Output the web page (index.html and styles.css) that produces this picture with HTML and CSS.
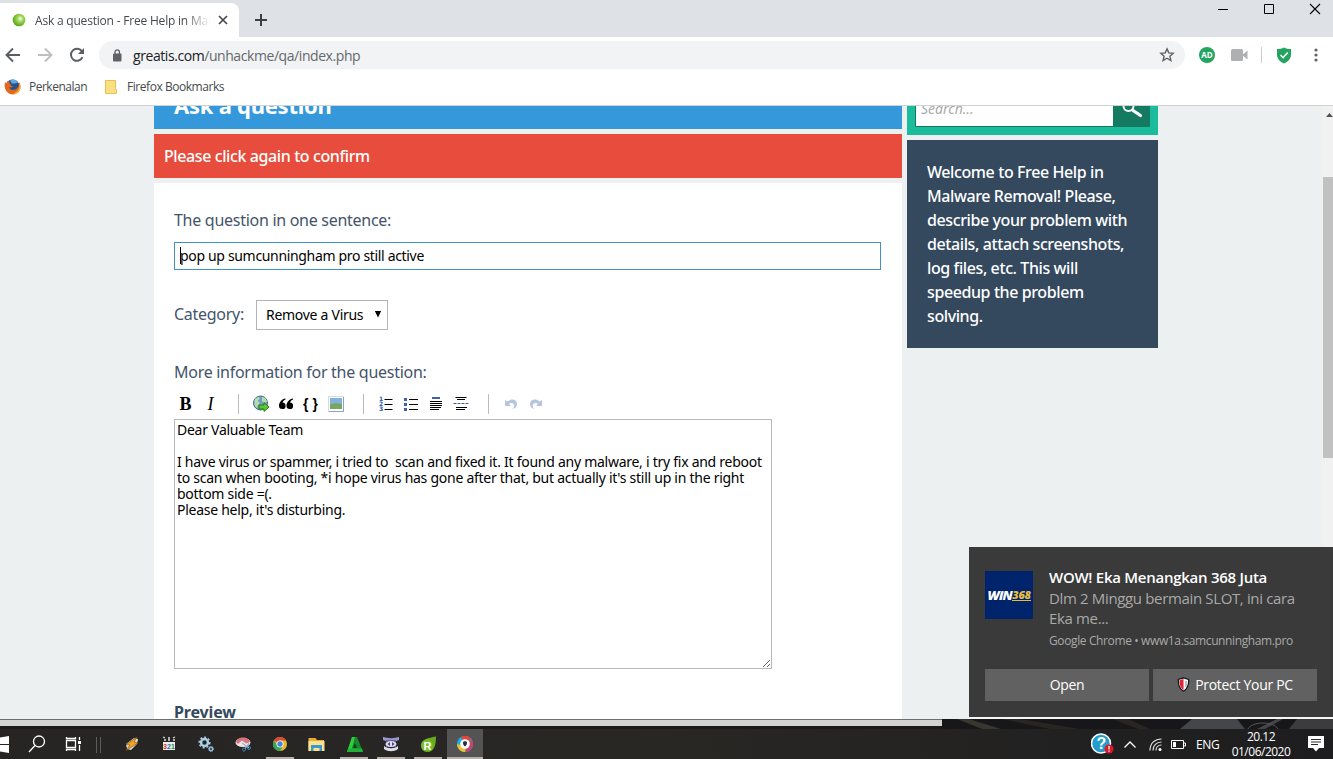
FILE: index.html
```
<!DOCTYPE html>
<html lang="en">

<head>
    <meta charset="UTF-8">
    <meta name="viewport" content="width=device-width, initial-scale=1.0">
    <title>Ask a question - Free Help in Malware Removal</title>
    <link rel="stylesheet" href="styles.css">
</head>

<body>
    <div class="tabs">
        <div class="tab">
            <svg class="favicon" width="14" height="14" viewBox="0 0 14 14"><defs><radialGradient id="ball" cx=".6" cy=".4" r=".6"><stop offset="0" stop-color="#fff"/><stop offset=".35" stop-color="#a8dc5c"/><stop offset="1" stop-color="#56a51d"/></radialGradient></defs><circle cx="7" cy="7" r="6.3" fill="url(#ball)"/></svg>
            <span class="tab-title"><span class="t-tab">Ask a question - Free Help in Mal</span></span>
            <svg width="10" height="10" viewBox="0 0 10 10" stroke="#45494d" stroke-width="1.7"><path d="M1 1l8 8M9 1l-8 8"/></svg>
        </div>
        <svg class="new-tab" width="14" height="14" viewBox="0 0 14 14" stroke="#3c4043" stroke-width="2"><path d="M7 1v12M1 7h12"/></svg>
        <div class="window-buttons">
            <svg width="12" height="12" viewBox="0 0 12 12" stroke="#000"><path d="M1 6.5h10"/></svg>
            <svg width="12" height="12" viewBox="0 0 12 12" stroke="#000" fill="none"><path d="M1.5 1.5h9v9h-9z"/></svg>
            <svg width="12" height="12" viewBox="0 0 12 12" stroke="#000" stroke-width="1.1"><path d="M1 1l10 10M11 1L1 11"/></svg>
        </div>
    </div>

    <div class="toolbar">
        <div class="nav">
            <svg width="16" height="16" viewBox="0 0 16 16" fill="none" stroke="#5a5e62" stroke-width="1.9"><path d="M15 8H2M8 1.5L1.5 8 8 14.5"/></svg>
            <svg width="16" height="16" viewBox="0 0 16 16" fill="none" stroke="#bcbec1" stroke-width="1.9"><path d="M1 8h13M8 1.5L14.500 8 8 14.500"/></svg>
            <svg width="16" height="16" viewBox="0 0 16 16" fill="none" stroke="#5a5e62" stroke-width="2"><path d="M13.500 10.200A6 6 0 1 1 12.800 4.200"/><path d="M15 1v6H9z" fill="#5a5e62" stroke="none"/></svg>
        </div>
        <div class="address">
            <svg width="10" height="13" viewBox="0 0 10 13"><rect x="1" y="4.500" width="8.500" height="8" rx="1" fill="#5f6368"/><path d="M3 5V3a2.200 2.200 0 0 1 4.400 0v2" fill="none" stroke="#5f6368" stroke-width="1.300"/></svg>
            <span class="url"><b>greatis.com</b>/unhackme/qa/index.php</span>
            <svg class="star" width="16" height="16" viewBox="0 0 16 16" fill="none" stroke="#5f6368" stroke-width="1.400"><path d="M8 1.900l1.800 4 4.400.400-3.300 2.900 1 4.300L8 11.200l-3.900 2.300 1-4.300L1.800 6.300l4.400-.400z"/></svg>
        </div>
        <div class="extensions">
            <span class="ad">AD</span>
            <svg width="17" height="14" viewBox="0 0 17 14" fill="#aeb0b2"><rect x="0" y="1" width="12" height="12" rx="1.500"/><path d="M11 7l5.500-4.500v9z"/></svg>
            <i class="ext-line"></i>
            <svg width="16" height="17" viewBox="0 0 16 17"><path d="M8 .5c2 1.200 4.500 1.500 7 1.500v5.500c0 4-3 7.500-7 9-4-1.500-7-5-7-9V2C3.500 2 6 1.700 8 .5z" fill="#23a55f"/><path d="M4.500 8l2.600 2.600L11.800 5.400" fill="none" stroke="#fff" stroke-width="1.500"/></svg>
            <svg width="4" height="14" viewBox="0 0 4 14" fill="#5f6368"><circle cx="2" cy="2" r="1.600"/><circle cx="2" cy="7" r="1.600"/><circle cx="2" cy="12" r="1.600"/></svg>
        </div>
    </div>

    <div class="bookmarks">
        <svg width="17" height="17" viewBox="0 0 17 17"><circle cx="8.500" cy="8.500" r="7" fill="#25548d"/><path d="M6 2.500c3-2 7-.8 8 2l-3 1-3 0z" fill="#63a9d8"/><path d="M1 4c-1.300 5 .5 9.500 4 11.500 4 2 8 .8 10.300-2.500C17 10 17 6.500 15 4c.2 3.500-.8 6.500-3.700 7.600-3 1-5.800-.3-6-2.600 1.500.8 3 .4 4-.7C7.500 8 6.500 7.500 6.600 6.300 5.500 5.200 5 4.200 5.200 3 4 3.200 3.200 4 2.800 5 1.800 5 1.300 4.600 1 4z" fill="#e6661c"/><path d="M13 13.500c2-1.500 3-5 2-9 2 3 2 7-.3 9.500-1.500 1.500-3.500 2-5.500 2z" fill="#f5b82e"/></svg>
        <span class="t-bookmark">Perkenalan</span>
        <svg class="folder" width="12" height="14" viewBox="0 0 12 14"><path d="M.5.5h10v9h1v4H.5z" fill="#fbdf80" stroke="#e5c257"/></svg>
        <span class="t-bookmark wide">Firefox Bookmarks</span>
    </div>

    <div class="page">
        <div class="main">
            <div class="heading"><h1>Ask a question</h1></div>
            <div class="error">Please click again to confirm</div>
            <div class="form">
                <label class="label l-title">The question in one sentence:</label>
                <div class="field"><i class="caret"></i><span>pop up sumcunningham pro still active</span></div>
                <div class="category">
                    <label class="label l-category">Category:</label>
                    <div class="select"><span>Remove a Virus</span><svg width="8" height="7" viewBox="0 0 8 7"><path d="M.8 0h6.400L4 6.500z"/></svg></div>
                </div>
                <label class="label l-more">More information for the question:</label>
                <div class="editor-buttons">
                    <b class="wmd-bold">B</b>
                    <i class="wmd-italic">I</i>
                    <i class="line"></i>
                    <svg viewBox="0 0 18 18"><circle cx="8.500" cy="8" r="7" fill="#6f9fca" stroke="#466f93"/><path d="M3 4c2-2 4-2 5-1L6 6 8 8l-2 2-1 3C2 11 2 7 3 4zM10 2c3 0 5 3 5 5l-3 1-2-2z" fill="#b7dba9"/><path d="M7 10h5V7.500l5 4.500-5 4.500V14H7z" fill="#5fc735" stroke="#278016"/></svg>
                    <svg viewBox="0 0 18 18"><path d="M8.500 3.500C5 4 2 7 2 10.800a3.300 3.300 0 1 0 3.500-3.300C6 6 7 5 8.500 4.500zM16 3.500c-3.500.5-6.500 3.500-6.500 7.300A3.300 3.300 0 1 0 13 7.500C13.500 6 14.500 5 16 4.500z"/></svg>
                    <b class="wmd-code">{ }</b>
                    <svg viewBox="0 0 18 18"><rect x="1.500" y="1.500" width="15" height="15" fill="#fff" stroke="#d5dbe4"/><path d="M16.500 2v14.500H2" fill="none" stroke="#8fa2bd"/><path d="M3 3h12v10H3z" fill="#82b2dc"/><path d="M3 9.500c4-2 8-1.500 12-.5v5H3z" fill="#79a663"/></svg>
                    <i class="line"></i>
                    <svg viewBox="0 0 18 18"><path d="M7.500 4.500h8M7.500 9.500h8M7.500 14.500h8" stroke="#000" stroke-width="1.200"/><g fill="#2f55a4" font-family="DejaVu Sans" font-weight="bold" font-size="6"><text x="2" y="6">1</text><text x="2" y="11">2</text><text x="2" y="16">3</text></g></svg>
                    <svg viewBox="0 0 18 18"><path d="M7 4.500h9M7 9.500h9M7 14.500h9" stroke="#000" stroke-width="1.200"/><path d="M2 3h3v3H2zM2 8h3v3H2zM2 13h3v3H2z" fill="#3d62a8"/></svg>
                    <svg viewBox="0 0 18 18"><path d="M5 3h8" stroke="#3d62a8" stroke-width="2"/><path d="M3 6.500h12M3 8.500h12M3 10.500h12M3 12.500h11M3 14.500h9" stroke="#000"/></svg>
                    <svg viewBox="0 0 18 18"><path d="M3.500 2.500h11M5 4.500h8M4 12.500h11M4 14.500h9" stroke="#000"/><path d="M1.500 8.500h15" stroke="#3d5f91" stroke-dasharray="3 1"/></svg>
                    <i class="line"></i>
                    <svg viewBox="0 0 18 18"><path d="M5.500 6.500c4.500-4 9.500-1.500 9.500 2.500 0 2.500-1.500 4.500-4.500 5 2-1.800 2.500-4.500.5-5.500-1.500-.8-3-.2-4 .5L9 11H3V5z" fill="#b6c5dd"/></svg>
                    <svg viewBox="0 0 18 18"><path d="M12.500 6.500C8 2.500 3 5 3 9c0 2.500 1.500 4.500 4.500 5-2-1.800-2.500-4.500-.5-5.500 1.500-.8 3-.2 4 .5L9 11h6V5z" fill="#b6c5dd"/></svg>
                </div>
                <textarea class="content" spellcheck="false">Dear Valuable Team

I have virus or spammer, i tried to  scan and fixed it. It found any malware, i try fix and reboot
to scan when booting, *i hope virus has gone after that, but actually it's still up in the right
bottom side =(.
Please help, it's disturbing.</textarea>
                <div class="preview">Preview</div>
            </div>
        </div>
        <div class="sidebar">
            <div class="search">
                <div class="search-box"><span>Search...</span></div>
                <div class="search-button"><svg width="22" height="21" viewBox="0 0 22 21" fill="none" stroke="#fff"><circle cx="7.500" cy="8" r="5" stroke-width="2"/><path d="M12 12.500l7.500 5" stroke-width="3.200" stroke-linecap="round"/></svg></div>
            </div>
            <div class="welcome">Welcome to Free Help in<br>Malware Removal! Please,<br>describe your problem with<br>details, attach screenshots,<br>log files, etc. This will<br>speedup the problem<br>solving.</div>
        </div>
        <div class="scrollbar">
            <svg width="7" height="4" viewBox="0 0 7 4"><path d="M0 4l3.500-4L7 4z" fill="#505050"/></svg>
            <div class="thumb"></div>
        </div>
    </div>

    <div class="desktop">
        <div class="window-edge"></div>
        <svg width="391" height="10" viewBox="0 0 391 10" preserveAspectRatio="none"><path d="M0 0h391v10H0z" fill="#171719"/><path d="M15 0h12l32 10H40z" fill="#39362f"/><path d="M60 0h18l60 10h-30zM170 0h16l22 10h-12z" fill="#282522"/><path d="M250 0h45l8 10h-65zM335 0h6l-18 10h-8z" fill="#45464a"/><path d="M306 10c4-8 26-8 30 0" fill="none" stroke="#55565a"/><path d="M355 0h36v10h-44z" fill="#3c3c3e"/></svg>
    </div>

    <div class="taskbar">
        <div class="apps">
            <div class="app start"><svg width="9" height="17" viewBox="0 0 9 17" fill="#fff"><path d="M0 1.500L9 0v8H0zM0 9h9v8l-9-1.500z"/></svg></div>
            <div class="app"><svg width="18" height="18" viewBox="0 0 18 18" fill="none" stroke="#fff" stroke-width="1.300"><circle cx="11" cy="6.500" r="5.500"/><path d="M7 10.500L1 17"/></svg></div>
            <div class="app task-view"><svg width="18" height="18" viewBox="0 0 18 18" fill="none" stroke="#fff" stroke-width="1.300"><path d="M2.500 5.500h9v7h-9zM2.500 2v1.500h9V2M2.500 16v-1.500h9V16M15.500 2v3M15.500 10v6"/><path d="M14 6h3v3h-3z" fill="#fff" stroke="none"/></svg></div>
            <div class="divider"></div>
            <div class="app"><svg width="16" height="16" viewBox="0 0 16 16"><path d="M2 8l8-6 4 1-1 5-6 6-4-1z" fill="#ddd"/><path d="M13 1L2 8.500l4 .5-4 5.500L14 7l-4-1z" fill="#f1a51e" stroke="#784607" stroke-width=".6"/></svg></div>
            <div class="app"><svg width="16" height="16" viewBox="0 0 16 16"><path d="M2 6h12v8H2z" fill="#ececec"/><path d="M2 1l2 1M7 2h2M12 2l2-1M3 4h2M7 4h2M12 4h2" stroke="#ddd" stroke-width="1.300"/><g font-family="Liberation Sans" font-size="7" font-weight="bold"><text x="2" y="12.500" fill="#c33">3</text><text x="6" y="12.500" fill="#27a">2</text><text x="10" y="12.500" fill="#383">1</text></g></svg></div>
            <div class="app"><svg width="16" height="16" viewBox="0 0 16 16" fill="none"><circle cx="6.500" cy="6.500" r="3.500" stroke="#a9d0e5" stroke-width="2.500"/><circle cx="6.500" cy="6.500" r="5.300" stroke="#a9d0e5" stroke-width="1.500" stroke-dasharray="2 2"/><circle cx="13" cy="13" r="1.700" stroke="#91bdd5" stroke-width="1.500"/><circle cx="13" cy="13" r="2.500" stroke="#91bdd5" stroke-dasharray="1 1"/></svg></div>
            <div class="app"><svg width="16" height="16" viewBox="0 0 16 16"><ellipse cx="8" cy="6.500" rx="7.500" ry="4.500" fill="#eee7e9"/><path d="M1 6c1-6 13-6 14 0l-4 1.500-4-3L3 8z" fill="#d8747c"/><path d="M7 7l7 5M14 7l-4 6" stroke="#9fb6c6" stroke-width="1.300"/><circle cx="9" cy="13.500" r="1.500" fill="none" stroke="#3b83b9"/><circle cx="14" cy="12" r="1.500" fill="none" stroke="#3b83b9"/></svg></div>
            <div class="app open"><svg width="14" height="14" viewBox="0 0 14 14"><circle cx="7" cy="7" r="7" fill="#eab92d"/><path d="M7 7L.9 3.500A7 7 0 0 1 13.100 3.500H7z" fill="#d94935"/><path d="M.9 3.500A7 7 0 0 0 7 14l3-5-3 1-3-2z" fill="#36a457"/><circle cx="7" cy="7" r="3.500" fill="#fff"/><circle cx="7" cy="7" r="2.700" fill="#4586df"/></svg></div>
            <div class="app"><svg width="17" height="15" viewBox="0 0 17 15"><path d="M.5 1h7l1.500 2h7v11H.5z" fill="#eaae37"/><path d="M.5 4h16v10H.5z" fill="#fae291"/><path d="M3 14V8h11v6h-2.500v-3h-6v3z" fill="#3999cf"/></svg></div>
            <div class="app open"><svg width="17" height="17" viewBox="0 0 17 17"><path d="M6 1h5l6 15H1z" fill="#17892c"/><path d="M6 1h3L5 16H1z" fill="#2cce3a"/><path d="M9 7l2 5H7z" fill="#183e1c"/><path d="M2 12.500h14l1 3.500H1z" fill="#20b236"/></svg></div>
            <div class="app open"><svg width="18" height="16" viewBox="0 0 18 16"><path d="M1 1c5 1.500 11 1.500 16 0v3c-5 2-11 2-16 0z" fill="#9896ca"/><path d="M4 4h10v7H4z" fill="#66639f"/><ellipse cx="9" cy="8" rx="5.500" ry="3" fill="#dedced"/><path d="M5.500 8l2.500-2v4zM12.500 8L10 6v4z" fill="#484582"/><path d="M2 10c4 3 10 3 14 0v3c-4 3-10 3-14 0z" fill="#dedced"/></svg></div>
            <div class="app open"><svg width="17" height="17" viewBox="0 0 17 17"><path d="M16 .5C8 2 1 3 1 10a6 6 0 0 0 6 6c8 0 9-8 9-15.500z" fill="#69aa20"/><circle cx="7" cy="9.500" r="5.800" fill="#79bd28"/><text x="3.500" y="13.500" font-family="Liberation Sans" font-weight="bold" font-size="11" fill="#fff">R</text></svg></div>
            <div class="app open active"><svg width="16" height="16" viewBox="0 0 16 16"><circle cx="8" cy="8" r="8" fill="#1dafde"/><path d="M4 1a8 8 0 0 1 11 3L8 7z" fill="#e94235"/><path d="M15 4a8 8 0 0 1-7 12l2-7z" fill="#c9436f"/><path d="M0 8a8 8 0 0 0 8 8l1-5z" fill="#f4c22c"/><circle cx="8" cy="8" r="4.800" fill="#fff"/><path d="M8 5l2 1c0 2.500-.7 3.700-2 4.500-1.300-.8-2-2-2-4.500z" fill="#273040"/></svg></div>
        </div>
        <div class="tray">
            <svg class="help" width="23" height="22" viewBox="0 0 23 22"><circle cx="10" cy="10.500" r="9.500" fill="#239dcc" stroke="#fff" stroke-width="1.500"/><text x="5.500" y="16" font-family="Liberation Sans" font-weight="bold" font-size="16" fill="#fff">?</text><circle cx="18" cy="16" r="4.500" fill="#d91b28"/><path d="M18 13v3.500M18 17.500v1.300" stroke="#fff" stroke-width="1.200"/></svg>
            <svg class="up" width="12" height="7" viewBox="0 0 12 7" fill="none" stroke="#fff" stroke-width="1.300"><path d="M.5 6.500L6 1l5.500 5.500"/></svg>
            <svg class="wifi" width="13" height="13" viewBox="0 0 13 13" fill="none" stroke="#ddd" stroke-width="1.200"><path d="M1 12.500C1 5 6 1 12.500 1M4 12.500c0-5 3.500-8.500 8.500-8.500M7 12.500c0-3 2-5.500 5.500-5.500"/><circle cx="11" cy="11.500" r="1.500" fill="#fff" stroke="none"/></svg>
            <svg class="battery" width="15" height="9" viewBox="0 0 15 9"><path d="M.5.5h12v8H.5zM13 3h1.500v3H13" fill="none" stroke="#fff"/><path d="M2 2h3v5H2z" fill="#fff"/></svg>
            <span class="lang">ENG</span>
            <div class="clock">20.12<br><span>01/06/2020</span></div>
            <svg class="action" width="16" height="16" viewBox="0 0 16 16"><path d="M0 0h16v12h-5l-3 3.500L5 12H0z" fill="#fff"/><path d="M3 3.500h10M3 6h10M3 8.500h7" stroke="#2c2b2c"/></svg>
        </div>
    </div>

    <div class="toast">
        <div class="toast-top">
            <div class="toast-logo"><span class="win">WiN</span><span class="num">368</span></div>
            <div class="toast-text">
                <div class="toast-title"><span>WOW! Eka Menangkan 368 Juta</span></div>
                <div class="toast-body">Dlm 2 Minggu bermain SLOT, ini cara<br>Eka me...</div>
                <div class="toast-source">Google Chrome • www1a.samcunningham.pro</div>
            </div>
        </div>
        <div class="toast-buttons">
            <div class="toast-button">Open</div>
            <div class="toast-button protect"><svg width="13" height="15" viewBox="0 0 13 15"><path d="M6.500.8l5.200 1.600c.3 5-1 9.500-5.200 11.800C2.300 11.900 1 7.400 1.300 2.400z" fill="#f5f5f5" stroke="#18191b" stroke-width="1.300"/><path d="M6.500 2v11C3.300 11 2.300 7 2.500 3.200z" fill="#df2436"/><path d="M9 4v6" stroke="#888" stroke-width="1"/></svg><span>Protect Your PC</span></div>
        </div>
    </div>
</body>

</html>
```

FILE: styles.css
```
* {
    box-sizing: border-box;
}

body {
    margin: 0;
    width: 1333px;
    height: 759px;
    overflow: hidden;
    display: flex;
    flex-direction: column;
    background: #fff;
    font-family: "Open Sans", sans-serif;
}

svg {
    display: block;
    flex-shrink: 0;
}

.tabs {
    height: 37px;
    display: flex;
    background: #dee1e6;
}

.tab {
    width: 239px;
    height: 34px;
    margin-top: 3px;
    padding: 0 11px 0 12px;
    display: flex;
    align-items: center;
    background: #fff;
    border-radius: 0 8px 0 0;
}

.tab-title {
    width: 175px;
    margin: 0 8px 0 9px;
    overflow: hidden;
    white-space: nowrap;
    font-size: 12px;
    color: #45494d;
    -webkit-mask-image: linear-gradient(to right, #000 150px, transparent 175px);
    mask-image: linear-gradient(to right, #000 150px, transparent 175px);
}

.t-tab {
    letter-spacing: -0.2px;
}

.new-tab {
    margin: 13px 0 0 15px;
}

.window-buttons {
    margin: 3px 12px 0 auto;
    display: flex;
    gap: 34px;
}

.toolbar {
    height: 36px;
    display: flex;
    align-items: center;
}

.nav {
    width: 99px;
    padding-left: 5px;
    display: flex;
    gap: 16px;
}

.address {
    width: 1086px;
    height: 28px;
    padding: 0 10px 0 13px;
    display: flex;
    align-items: center;
    background: #f1f3f4;
    border-radius: 14px;
}

.url {
    margin-left: 11px;
    font-size: 14px;
    letter-spacing: -0.43px;
    color: #66696d;
}

.url b {
    font-weight: normal;
    color: #202124;
}

.star {
    margin-left: auto;
}

.extensions {
    margin-left: 14px;
    display: flex;
    align-items: center;
}

.ad {
    width: 16px;
    height: 16px;
    margin-right: 16px;
    border-radius: 50%;
    background: #23a55f;
    color: #fff;
    font-size: 8px;
    font-weight: bold;
    line-height: 16px;
    text-align: center;
}

.ext-line {
    width: 1px;
    height: 16px;
    margin: 0 14px 0 13px;
    background: #cbcdd0;
}

.extensions svg:last-child {
    margin-left: 22px;
}

.bookmarks {
    height: 33px;
    padding: 0 0 5px 4px;
    display: flex;
    align-items: center;
    border-bottom: 1px solid #d0d2d4;
    font-size: 12px;
    color: #45494d;
}

.t-bookmark {
    margin-left: 8px;
    letter-spacing: -0.5px;
}

.folder {
    margin-left: 18px;
}

.wide {
    margin-left: 10px;
    letter-spacing: -0.45px;
}

/* web page */
.page {
    height: 613px;
    padding-left: 154px;
    display: flex;
    overflow: hidden;
    background: #ecf0f1;
    font-family: "Noto Sans", sans-serif;
}

.main {
    width: 748px;
    margin-right: 5px;
}

.heading {
    height: 23px;
    overflow: hidden;
    background: #3498db;
}

.heading h1 {
    margin: -18px 0 0 20px;
    font-size: 22px;
    line-height: 34px;
    letter-spacing: -0.25px;
    color: #fff;
}

.error {
    height: 44px;
    margin: 5px 0;
    padding-left: 10px;
    background: #e74c3c;
    color: #fff;
    font-size: 16px;
    font-weight: 500;
    line-height: 44px;
    letter-spacing: -0.4px;
}

.form {
    height: 600px;
    padding: 25px 20px 0;
    background: #fff;
}

.label {
    display: block;
    height: 24px;
    font-size: 16px;
    line-height: 24px;
    letter-spacing: -0.28px;
    color: #44546a;
}

.field {
    width: 707px;
    height: 28px;
    margin: 10px 0 30px;
    padding: 0 0 2px 5px;
    display: flex;
    align-items: center;
    border: 1px solid #4190c8;
    font-size: 14px;
    letter-spacing: -0.33px;
}

.caret {
    width: 1px;
    height: 17px;
    margin-right: -1px;
    background: #000;
}

.category {
    height: 30px;
    margin-bottom: 30px;
    display: flex;
    align-items: center;
}

.l-category {
    width: 82px;
    margin-bottom: 2px;
}

.select {
    width: 132px;
    height: 30px;
    padding: 0 5px 2px 9px;
    display: flex;
    align-items: center;
    justify-content: space-between;
    border: 1px solid #b4b4b4;
    font-size: 14px;
    letter-spacing: -0.28px;
}

.editor-buttons {
    height: 35px;
    padding-top: 5px;
    display: grid;
    grid-template-columns: repeat(15, 25px);
    align-items: center;
    justify-items: center;
}

.editor-buttons svg {
    width: 18px;
    height: 18px;
    margin-right: 2px;
}

.wmd-bold,
.wmd-italic {
    margin-right: 2px;
    font-family: "Liberation Serif", serif;
    font-size: 18px;
    line-height: 18px;
}

.wmd-italic {
    font-weight: 600;
    font-weight: normal;
}

.wmd-code {
    margin-right: 2px;
    font-family: "Liberation Sans", sans-serif;
    font-size: 14px;
    line-height: 18px;
}

.line {
    width: 1px;
    height: 20px;
    margin-left: 3px;
    background: #bbb;
}

.content {
    display: block;
    width: 598px;
    height: 250px;
    margin: 0;
    padding: 2px;
    border: 1px solid #b8b8b8;
    overflow: hidden;
    white-space: pre;
    font-family: "Noto Sans", sans-serif;
    font-size: 14px;
    line-height: 16px;
    letter-spacing: -0.265px;
    color: #000;
}

.preview {
    margin-top: 31px;
    font-size: 16px;
    font-weight: bold;
    line-height: 24px;
    letter-spacing: -0.15px;
    color: #34495e;
}

.sidebar {
    width: 251px;
}

.search {
    height: 29px;
    padding: 0 8px 8px;
    display: flex;
    background: #1abc9c;
}

.search-box {
    width: 199px;
    border: 1px solid #147a62;
    border-top: 0;
    background: #fff;
    font-size: 14px;
    font-style: italic;
    line-height: 6px;
    color: #aaa;
    padding-left: 5px;
    overflow: hidden;
}

.search-button {
    width: 36px;
    padding-left: 7px;
    overflow: hidden;
    background: #147a62;
}

.search-button svg {
    margin-top: -8px;
}

.welcome {
    height: 208px;
    margin-top: 5px;
    padding: 20px;
    background: #34495e;
    color: #fff;
    font-size: 16px;
    font-weight: 500;
    line-height: 24px;
    letter-spacing: -0.4px;
    white-space: nowrap;
}

.scrollbar {
    width: 11px;
    margin-left: auto;
    padding-top: 7px;
    background: #f1f1f1;
}

.scrollbar svg {
    margin-left: 4px;
}

.thumb {
    height: 281px;
    margin: 60px 0 0 1px;
    background: #c1c1c1;
}

/* strip between window and taskbar */
.desktop {
    height: 10px;
    display: flex;
    background: #1a1a1a;
}

.window-edge {
    width: 942px;
    height: 7px;
    border-top: 1px solid #6c706d;
    background: #d3d4d2;
}

.taskbar {
    height: 30px;
    display: flex;
    justify-content: space-between;
    background: linear-gradient(to right, #272524, #292724 50%, #1d1d1f);
}

.apps {
    display: flex;
}

.app {
    width: 37px;
    height: 30px;
    display: flex;
    align-items: center;
    justify-content: center;
}

.start {
    width: 18px;
    justify-content: flex-start;
}

.task-view {
    width: 36px;
}

.divider {
    width: 5px;
    height: 16px;
    margin: 8px 12px 0 5px;
    border: 1px solid #5e5c5b;
    border-width: 0 1px;
}

.open {
    width: 28px;
    margin: 0 4px 0 5px;
    padding-top: 2px;
    border-bottom: 2px solid #b8b0ac;
}

.active {
    width: 36px;
    margin: 0 0 0 1px;
    background: #555454;
}

.tray {
    width: 243px;
    padding-left: 1px;
    display: flex;
    align-items: center;
    color: #fff;
    font-size: 12px;
}

.up {
    margin-left: 10px;
}

.wifi {
    margin-left: 13px;
}

.battery {
    margin-left: 9px;
}

.lang {
    width: 24px;
    margin-left: 10px;
    letter-spacing: -0.4px;
}

.clock {
    width: 66px;
    margin-left: 8px;
    text-align: center;
    line-height: 15.5px;
    letter-spacing: -0.5px;
}

.action {
    margin-left: 14px;
}

/* notification */
.toast {
    position: absolute;
    left: 969px;
    top: 547px;
    width: 364px;
    height: 172px;
    padding: 20px 16px 0;
    background: #3a3a3a;
    border-bottom: 2px solid #f4f6f6;
    color: #fff;
}

.toast-top {
    height: 102px;
    display: flex;
    gap: 16px;
}

.toast-logo {
    width: 48px;
    height: 48px;
    margin-top: 4px;
    display: flex;
    align-items: center;
    justify-content: center;
    background: #00246b;
    font-style: italic;
    font-weight: 800;
    white-space: nowrap;
}

.win {
    font-size: 13px;
    letter-spacing: -0.6px;
}

.num {
    font-size: 11px;
    line-height: 10px;
    letter-spacing: -0.3px;
    color: #e9bd3b;
    border-bottom: 1px solid #e9bd3b;
}

.toast-text {
    white-space: nowrap;
}

.toast-title {
    font-size: 15px;
    font-weight: 600;
    line-height: 21px;
    letter-spacing: -0.27px;
}

.toast-body {
    font-size: 15px;
    line-height: 20px;
    letter-spacing: -0.35px;
    color: #a9a9a9;
}

.toast-source {
    margin-top: 4px;
    font-size: 12px;
    line-height: 18px;
    letter-spacing: -0.38px;
    color: #a9a9a9;
}

.toast-buttons {
    display: flex;
    gap: 4px;
}

.toast-button {
    width: 164px;
    height: 32px;
    padding-bottom: 1px;
    display: flex;
    align-items: center;
    justify-content: center;
    gap: 5px;
    background: #616161;
    font-size: 14px;
    letter-spacing: -0.3px;
}
```
